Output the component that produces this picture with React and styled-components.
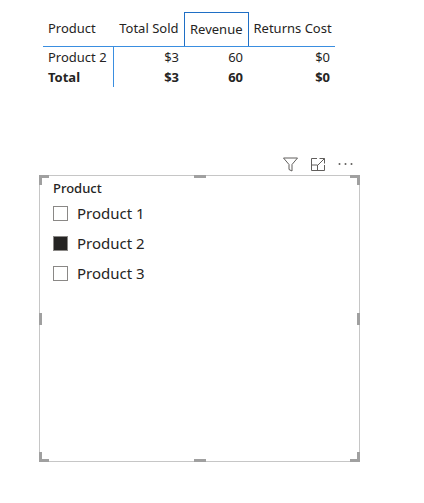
import React from 'react';
import styled, { createGlobalStyle } from 'styled-components';

const GlobalStyle = createGlobalStyle`
  html, body {
    margin: 0;
    padding: 0;
    background: #ffffff;
  }
  body {
    font-family: 'Segoe UI', 'Noto Sans', 'Open Sans', sans-serif;
    color: #252423;
  }
`;

const Page = styled.div`
  width: 424px;
  height: 503px;
  display: flex;
  flex-direction: column;
  align-items: flex-start;
  padding: 12px 0 0 43px;
  box-sizing: border-box;
`;

const Table = styled.table`
  border-collapse: collapse;
  table-layout: fixed;
  width: 292px;
  font-size: 13px;
  color: #252423;
`;

const Head = styled.th`
  font-weight: 400;
  height: 34px;
  box-sizing: border-box;
  padding: 0 5px 2px;
  text-align: ${p => (p.left ? 'left' : 'right')};
  width: ${p => p.w}px;
  border: ${p => (p.active ? '1px solid #1f6fc5' : 'none')};
  border-bottom: 1px solid #3a8ee0;
  white-space: nowrap;
`;

const Cell = styled.td`
  height: 20px;
  padding: 0 5px;
  line-height: 19px;
  text-align: ${p => (p.left ? 'left' : 'right')};
  font-weight: ${p => (p.bold ? 700 : 400)};
  border-right: ${p => (p.divider ? '1px solid #3a8ee0' : 'none')};
  white-space: nowrap;
`;

const Visual = styled.div`
  position: relative;
  margin-top: 68px;
  margin-left: -4px;
  width: 321px;
`;

const Toolbar = styled.div`
  display: flex;
  justify-content: flex-end;
  align-items: center;
  gap: 13px;
  height: 18px;
  padding-right: 7px;
  margin-bottom: 2px;
`;

const Frame = styled.div`
  position: relative;
  height: 287px;
  border: 1px solid #c6c6c6;
  box-sizing: border-box;
  padding: 2px 13px;
`;

const Handle = styled.span`
  position: absolute;
  background: #a0a0a0;
  ${p => p.css}
`;

const Corner = styled.span`
  position: absolute;
  width: 10px;
  height: 10px;
  box-sizing: border-box;
  border-color: #a0a0a0;
  border-style: solid;
  border-width: ${p => p.bw};
  ${p => p.pos}
`;

const Title = styled.div`
  font-size: 13px;
  font-weight: 500;
  height: 20px;
  line-height: 20px;
`;

const Option = styled.div`
  display: flex;
  align-items: center;
  gap: 9px;
  height: 30px;
  font-size: 15px;
`;

const Box = styled.span`
  width: 15px;
  height: 15px;
  box-sizing: border-box;
  border: 1px solid #8a8886;
  background: ${p => (p.checked ? '#252423' : '#ffffff')};
`;

const FilterIcon = () => (
  <svg width="15" height="15" viewBox="0 0 15 15" fill="none" stroke="#605e5c" strokeWidth="1">
    <path d="M0.5 1 H14.5 L9 7.5 V14 L6 12.5 V7.5 Z" strokeLinejoin="round" />
  </svg>
);

const FocusIcon = () => (
  <svg width="14" height="13" viewBox="0 0 14 13" fill="none" stroke="#605e5c" strokeWidth="1">
    <path d="M6 0.5 H0.5 V12.5 H13.5 V7" />
    <path d="M8.5 0.5 H13.5 V5.5" />
    <path d="M13.5 0.5 L7 7" />
    <path d="M0.5 7 H6.5 V12.5" />
  </svg>
);

const MoreIcon = () => (
  <svg width="15" height="4" viewBox="0 0 15 4" fill="#605e5c">
    <circle cx="1.5" cy="2" r="1" />
    <circle cx="7.5" cy="2" r="1" />
    <circle cx="13.5" cy="2" r="1" />
  </svg>
);

const rows = [
  { name: 'Product 2', sold: '$3', revenue: '60', returns: '$0' },
];

export default function App() {
  return (
    <>
      <GlobalStyle />
      <Page>
        <Table>
          <thead>
            <tr>
              <Head left w={70}>Product</Head>
              <Head w={71}>Total Sold</Head>
              <Head active w={64}>Revenue</Head>
              <Head w={87}>Returns Cost</Head>
            </tr>
          </thead>
          <tbody>
            {rows.map(r => (
              <tr key={r.name}>
                <Cell left divider>{r.name}</Cell>
                <Cell>{r.sold}</Cell>
                <Cell>{r.revenue}</Cell>
                <Cell>{r.returns}</Cell>
              </tr>
            ))}
            <tr>
              <Cell left divider bold>Total</Cell>
              <Cell bold>$3</Cell>
              <Cell bold>60</Cell>
              <Cell bold>$0</Cell>
            </tr>
          </tbody>
        </Table>

        <Visual>
          <Toolbar>
            <FilterIcon />
            <FocusIcon />
            <MoreIcon />
          </Toolbar>
          <Frame>
            <Corner bw="3px 0 0 3px" pos="top: -1px; left: -1px;" />
            <Corner bw="3px 3px 0 0" pos="top: -1px; right: -1px;" />
            <Corner bw="0 0 3px 3px" pos="bottom: -1px; left: -1px;" />
            <Corner bw="0 3px 3px 0" pos="bottom: -1px; right: -1px;" />
            <Handle css="top: -1px; left: 154px; width: 12px; height: 3px;" />
            <Handle css="bottom: -1px; left: 154px; width: 12px; height: 3px;" />
            <Handle css="left: -1px; top: 137px; width: 3px; height: 12px;" />
            <Handle css="right: -1px; top: 137px; width: 3px; height: 12px;" />
            <Title>Product</Title>
            <Option><Box />Product 1</Option>
            <Option><Box checked />Product 2</Option>
            <Option><Box />Product 3</Option>
          </Frame>
        </Visual>
      </Page>
    </>
  );
}
